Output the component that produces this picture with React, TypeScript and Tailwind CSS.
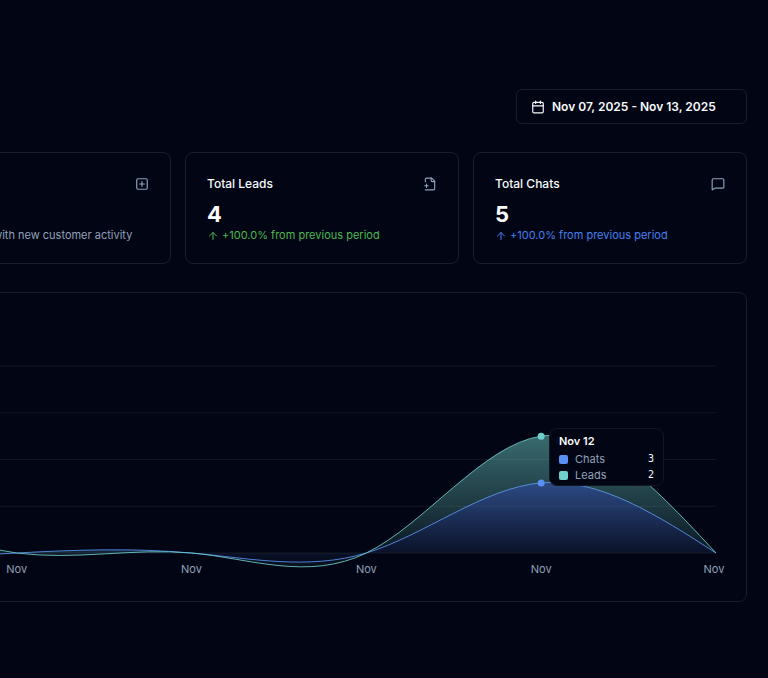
import React from 'react';
import { ArrowUp, Calendar, MessageSquare, SquarePlus } from 'lucide-react';

interface DayActivity {
  label: string;
  chats: number;
  leads: number;
}

const activity: DayActivity[] = [
  { label: 'Nov', chats: 2, leads: 0 },
  { label: 'Nov', chats: 0, leads: 2 },
  { label: 'Nov', chats: 0, leads: 0 },
  { label: 'Nov', chats: 0, leads: 0 },
  { label: 'Nov', chats: 0, leads: 0 },
  { label: 'Nov', chats: 3, leads: 2 },
  { label: 'Nov', chats: 0, leads: 0 },
];

const CHART = { width: 1094, height: 265, left: 36, right: 1085, top: 51, bottom: 238, max: 8 };

type Point = [number, number];

const xAt = (i: number) => CHART.left + (i * (CHART.right - CHART.left)) / (activity.length - 1);
const yAt = (value: number) => CHART.bottom - (value / CHART.max) * (CHART.bottom - CHART.top);

// Control points of a natural cubic spline along one axis
const controlPoints = (v: number[]): [number[], number[]] => {
  const n = v.length - 1;
  const a = new Array<number>(n);
  const b = new Array<number>(n);
  const r = new Array<number>(n);
  a[0] = 0;
  b[0] = 2;
  r[0] = v[0] + 2 * v[1];
  for (let i = 1; i < n - 1; i++) {
    a[i] = 1;
    b[i] = 4;
    r[i] = 4 * v[i] + 2 * v[i + 1];
  }
  a[n - 1] = 2;
  b[n - 1] = 7;
  r[n - 1] = 8 * v[n - 1] + v[n];
  for (let i = 1; i < n; i++) {
    const m = a[i] / b[i - 1];
    b[i] -= m;
    r[i] -= m * r[i - 1];
  }
  a[n - 1] = r[n - 1] / b[n - 1];
  for (let i = n - 2; i >= 0; i--) a[i] = (r[i] - a[i + 1]) / b[i];
  b[n - 1] = (v[n] + a[n - 1]) / 2;
  for (let i = 0; i < n - 1; i++) b[i] = 2 * v[i + 1] - a[i + 1];
  return [a, b];
};

const spline = (points: Point[]) => {
  const [ax, bx] = controlPoints(points.map((p) => p[0]));
  const [ay, by] = controlPoints(points.map((p) => p[1]));
  return points
    .slice(1)
    .map((p, i) => `C${ax[i]},${ay[i]} ${bx[i]},${by[i]} ${p[0]},${p[1]}`)
    .join(' ');
};

const chatPoints: Point[] = activity.map((d, i) => [xAt(i), yAt(d.chats)]);
const totalPoints: Point[] = activity.map((d, i) => [xAt(i), yAt(d.chats + d.leads)]);
const chatsReversed = [...chatPoints].reverse();

const chatLine = `M${chatPoints[0]} ${spline(chatPoints)}`;
const totalLine = `M${totalPoints[0]} ${spline(totalPoints)}`;
const chatArea = `${chatLine} L${CHART.left},${CHART.bottom} Z`;
const leadArea = `${totalLine} L${chatsReversed[0]} ${spline(chatsReversed)} Z`;

const ACTIVE = 5;

const ActivityChart: React.FC = () => (
  <div className="relative">
    <svg viewBox={`0 0 ${CHART.width} ${CHART.height}`} className="block w-full" role="img" aria-label="Chats and leads per day">
      <defs>
        <linearGradient id="fillChats" x1="0" y1="0" x2="0" y2="1">
          <stop offset="5%" stopColor="#5890f6" stopOpacity="0.8" />
          <stop offset="95%" stopColor="#5890f6" stopOpacity="0.1" />
        </linearGradient>
        <linearGradient id="fillLeads" x1="0" y1="0" x2="0" y2="1">
          <stop offset="5%" stopColor="#70cfca" stopOpacity="0.8" />
          <stop offset="95%" stopColor="#70cfca" stopOpacity="0.1" />
        </linearGradient>
      </defs>
      {[0, 2, 4, 6, 8].map((v) => (
        <line key={v} x1={CHART.left} x2={CHART.right} y1={yAt(v)} y2={yAt(v)} stroke="#131722" />
      ))}
      <path d={chatArea} fill="url(#fillChats)" fillOpacity="0.6" />
      <path d={chatLine} fill="none" stroke="#5890f6" strokeOpacity="0.85" />
      <path d={leadArea} fill="url(#fillLeads)" fillOpacity="0.6" />
      <path d={totalLine} fill="none" stroke="#70cfca" strokeOpacity="0.85" />
      <circle cx={xAt(ACTIVE)} cy={chatPoints[ACTIVE][1]} r="3.5" fill="#5890f6" />
      <circle cx={xAt(ACTIVE)} cy={totalPoints[ACTIVE][1]} r="3.5" fill="#70cfca" />
      {activity.map((d, i) => (
        <text
          key={i}
          x={Math.min(xAt(i), CHART.width - 11)}
          y="258"
          textAnchor="middle"
          className="fill-slate-400 text-[11px]"
        >
          {d.label}
        </text>
      ))}
    </svg>
    <div className="absolute top-[113px] right-[61px] w-[115px] rounded-lg border border-[#131722] bg-[#020513] px-[9px] pt-1 pb-[2px] text-[11px] leading-4">
      <p className="mb-[2px] font-semibold text-slate-50">Nov 12</p>
      <dl>
        <div className="flex items-center">
          <span className="mr-[7px] size-[9px] rounded-[2px] bg-[#5890f6]" />
          <dt className="flex-1 text-slate-400">Chats</dt>
          <dd className="font-['DejaVu_Sans_Mono',monospace] text-[10px] text-slate-50">3</dd>
        </div>
        <div className="flex items-center">
          <span className="mr-[7px] size-[9px] rounded-[2px] bg-[#70cfca]" />
          <dt className="flex-1 text-slate-400">Leads</dt>
          <dd className="font-['DejaVu_Sans_Mono',monospace] text-[10px] text-slate-50">2</dd>
        </div>
      </dl>
    </div>
  </div>
);

const FilePlusIcon: React.FC = () => (
  <svg className="size-[14px]" viewBox="0 0 24 24" fill="none" stroke="currentColor" strokeWidth="2" strokeLinecap="round" strokeLinejoin="round">
    <path d="M4 22h14a2 2 0 0 0 2-2V7l-5-5H6a2 2 0 0 0-2 2v4" />
    <path d="M14 2v4a2 2 0 0 0 2 2h4" />
    <path d="M3 15h6" />
    <path d="M6 12v6" />
  </svg>
);

interface StatCardProps {
  title: string;
  value: number;
  icon: React.ReactNode;
  className?: string;
  children: React.ReactNode;
}

const StatCard: React.FC<StatCardProps> = ({ title, value, icon, className = '', children }) => (
  <section className={`rounded-lg border border-[#1a1e2a] px-[21px] pt-[21px] pb-5 ${className}`}>
    <div className="flex items-center justify-between text-slate-400">
      <h2 className="text-[12px] leading-[19px] font-medium text-slate-50">{title}</h2>
      {icon}
    </div>
    <p className="mt-[7px] text-[22px] leading-7 font-bold">{value}</p>
    <div className="flex items-center gap-[3px] text-[11px] leading-[15px]">{children}</div>
  </section>
);

const App: React.FC = () => {
  return (
    <div className="flex min-h-screen justify-end overflow-hidden bg-[#020513] font-['Inter',sans-serif] text-slate-50">
      <main className="w-full min-w-[1159px] pt-[89px] pr-[21px]">
        <div className="flex justify-end">
          <button
            type="button"
            className="flex h-[35px] w-[231px] items-center gap-[7px] rounded-md border border-[#1a1e2a] px-[14px] text-[12px] font-semibold"
          >
            <Calendar size={14} />
            Nov 07, 2025 - Nov 13, 2025
          </button>
        </div>

        <div className="mt-7 grid grid-cols-4 gap-[14px]">
          <StatCard title="Active Days" value={3} icon={<SquarePlus size={14} />} className="col-start-2">
            <span className="text-slate-400">Engagements with new customer activity</span>
          </StatCard>
          <StatCard title="Total Leads" value={4} icon={<FilePlusIcon />}>
            <ArrowUp size={12} className="text-[#4bb954]" />
            <span className="text-[#4bb954]">+100.0% from previous period</span>
          </StatCard>
          <StatCard title="Total Chats" value={5} icon={<MessageSquare size={14} />}>
            <ArrowUp size={12} className="text-[#4580f2]" />
            <span className="text-[#4580f2]">+100.0% from previous period</span>
          </StatCard>
        </div>

        <section className="mt-7 rounded-lg border border-[#1a1e2a] px-[21px] pt-[22px] pb-[21px]">
          <ActivityChart />
        </section>
      </main>
    </div>
  );
};

export default App;
